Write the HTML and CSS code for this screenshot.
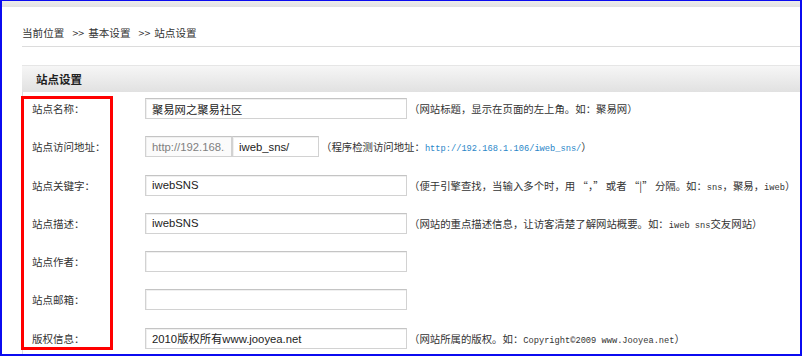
FILE: index.html
```html
<!DOCTYPE html>
<html lang="zh-CN">
<head>
    <meta charset="UTF-8">
    <title>站点设置</title>
    <link rel="stylesheet" href="styles.css">
</head>
<body>
<div class="frame">
    <div class="top-band"></div>

    <div class="main">
        <!-- Breadcrumb -->
        <div class="crumb">当前位置<span class="sep">&gt;&gt;</span>基本设置<span class="sep">&gt;&gt;</span>站点设置</div>

        <!-- Settings box -->
        <div class="panel-title">站点设置</div>
        <div class="panel">
            <div class="form-row">
                <label class="label">站点名称：</label>
                <input class="text" type="text" value="聚易网之聚易社区">
                <span class="hint">（网站标题，显示在页面的左上角。如：聚易网）</span>
            </div>
            <div class="form-row">
                <label class="label">站点访问地址：</label>
                <input class="text half readonly" type="text" value="http://192.168.1.106/" readonly>
                <input class="text half" type="text" value="iweb_sns/">
                <span class="hint">（程序检测访问地址：<span class="en url">http://192.168.1.106/iweb_sns/</span>）</span>
            </div>
            <div class="form-row">
                <label class="label">站点关键字：</label>
                <input class="text" type="text" value="iwebSNS">
                <span class="hint">（便于引擎查找，当输入多个时，用 “，” 或者 “|” 分隔。如：<span class="en">sns</span>，聚易，<span class="en">iweb</span>）</span>
            </div>
            <div class="form-row">
                <label class="label">站点描述：</label>
                <input class="text" type="text" value="iwebSNS">
                <span class="hint">（网站的重点描述信息，让访客清楚了解网站概要。如：<span class="en">iweb sns</span>交友网站）</span>
            </div>
            <div class="form-row">
                <label class="label">站点作者：</label>
                <input class="text" type="text" value="">
            </div>
            <div class="form-row">
                <label class="label">站点邮箱：</label>
                <input class="text" type="text" value="">
            </div>
            <div class="form-row">
                <label class="label">版权信息：</label>
                <input class="text" type="text" value="2010版权所有www.jooyea.net">
                <span class="hint">（网站所属的版权。如：<span class="en">Copyright©2009 www.Jooyea.net</span>）</span>
            </div>
        </div>
    </div>

    <!-- Annotation around the labels -->
    <div class="mark"></div>
</div>
</body>
</html>
```

FILE: styles.css
```css
/* General */
body {
    margin: 0;
    font-family: "Noto Sans CJK SC", sans-serif;
    color: #333;
    background: #fff;
}

.frame {
    position: relative;
    width: 802px;
    height: 356px;
    box-sizing: border-box;
    border: 2px solid #0b0bf0;
    border-top-width: 1px;
    overflow: hidden;
}

.top-band {
    height: 6px;
    background: linear-gradient(#ececec, #e2e2e2);
}

.main {
    padding-left: 20px;
}

/* Breadcrumb */
.crumb {
    font-size: 10.6px;
    line-height: 16px;
    padding: 18px 0 5px 0;
    border-bottom: 1px solid #dcdcdc;
    color: #333;
}

.crumb .sep {
    margin: 0 4px 0 8px;
}

/* Panel */
.panel-title {
    margin-top: 18px;
    height: 26px;
    line-height: 26px;
    padding-left: 14px;
    border-top: 1px solid #e6e6e6;
    background: linear-gradient(#f6f6f6, #e1e1e1);
    font-size: 11.5px;
    font-weight: bold;
    color: #222;
}

.panel {
    border-left: 1px solid #dcdcdc;
    padding-top: 6px;
    height: 270px;
    display: flex;
    flex-direction: column;
    gap: 17.3px;
}

.form-row {
    display: flex;
    align-items: center;
    height: 21px;
}

.label {
    width: 122px;
    box-sizing: border-box;
    padding-left: 9px;
    font-size: 10.5px;
    color: #333;
}

.text {
    width: 262px;
    height: 21px;
    box-sizing: border-box;
    margin: 0;
    padding: 0 6px;
    border: 1px solid #d2d2d2;
    border-top-color: #c4c4c4;
    box-shadow: inset 1px 1px 0 #f0f0f0;
    font-family: "Liberation Sans", "Noto Sans CJK SC", sans-serif;
    font-size: 11.3px;
    color: #222;
    background: #fff;
    outline: none;
}

.text.half {
    width: 87px;
}

.text.readonly {
    color: #808080;
    background: #fbfbfb;
}

.hint {
    margin-left: 2px;
    font-size: 10.4px;
    white-space: nowrap;
    color: #333;
}

.en {
    font-family: "Liberation Mono", monospace;
    font-size: 8.7px;
}

.url {
    color: #2a86c8;
}

/* Red annotation box */
.mark {
    position: absolute;
    left: 19px;
    top: 95px;
    width: 92px;
    height: 254px;
    box-sizing: border-box;
    border: 3px solid #f00;
}
```
